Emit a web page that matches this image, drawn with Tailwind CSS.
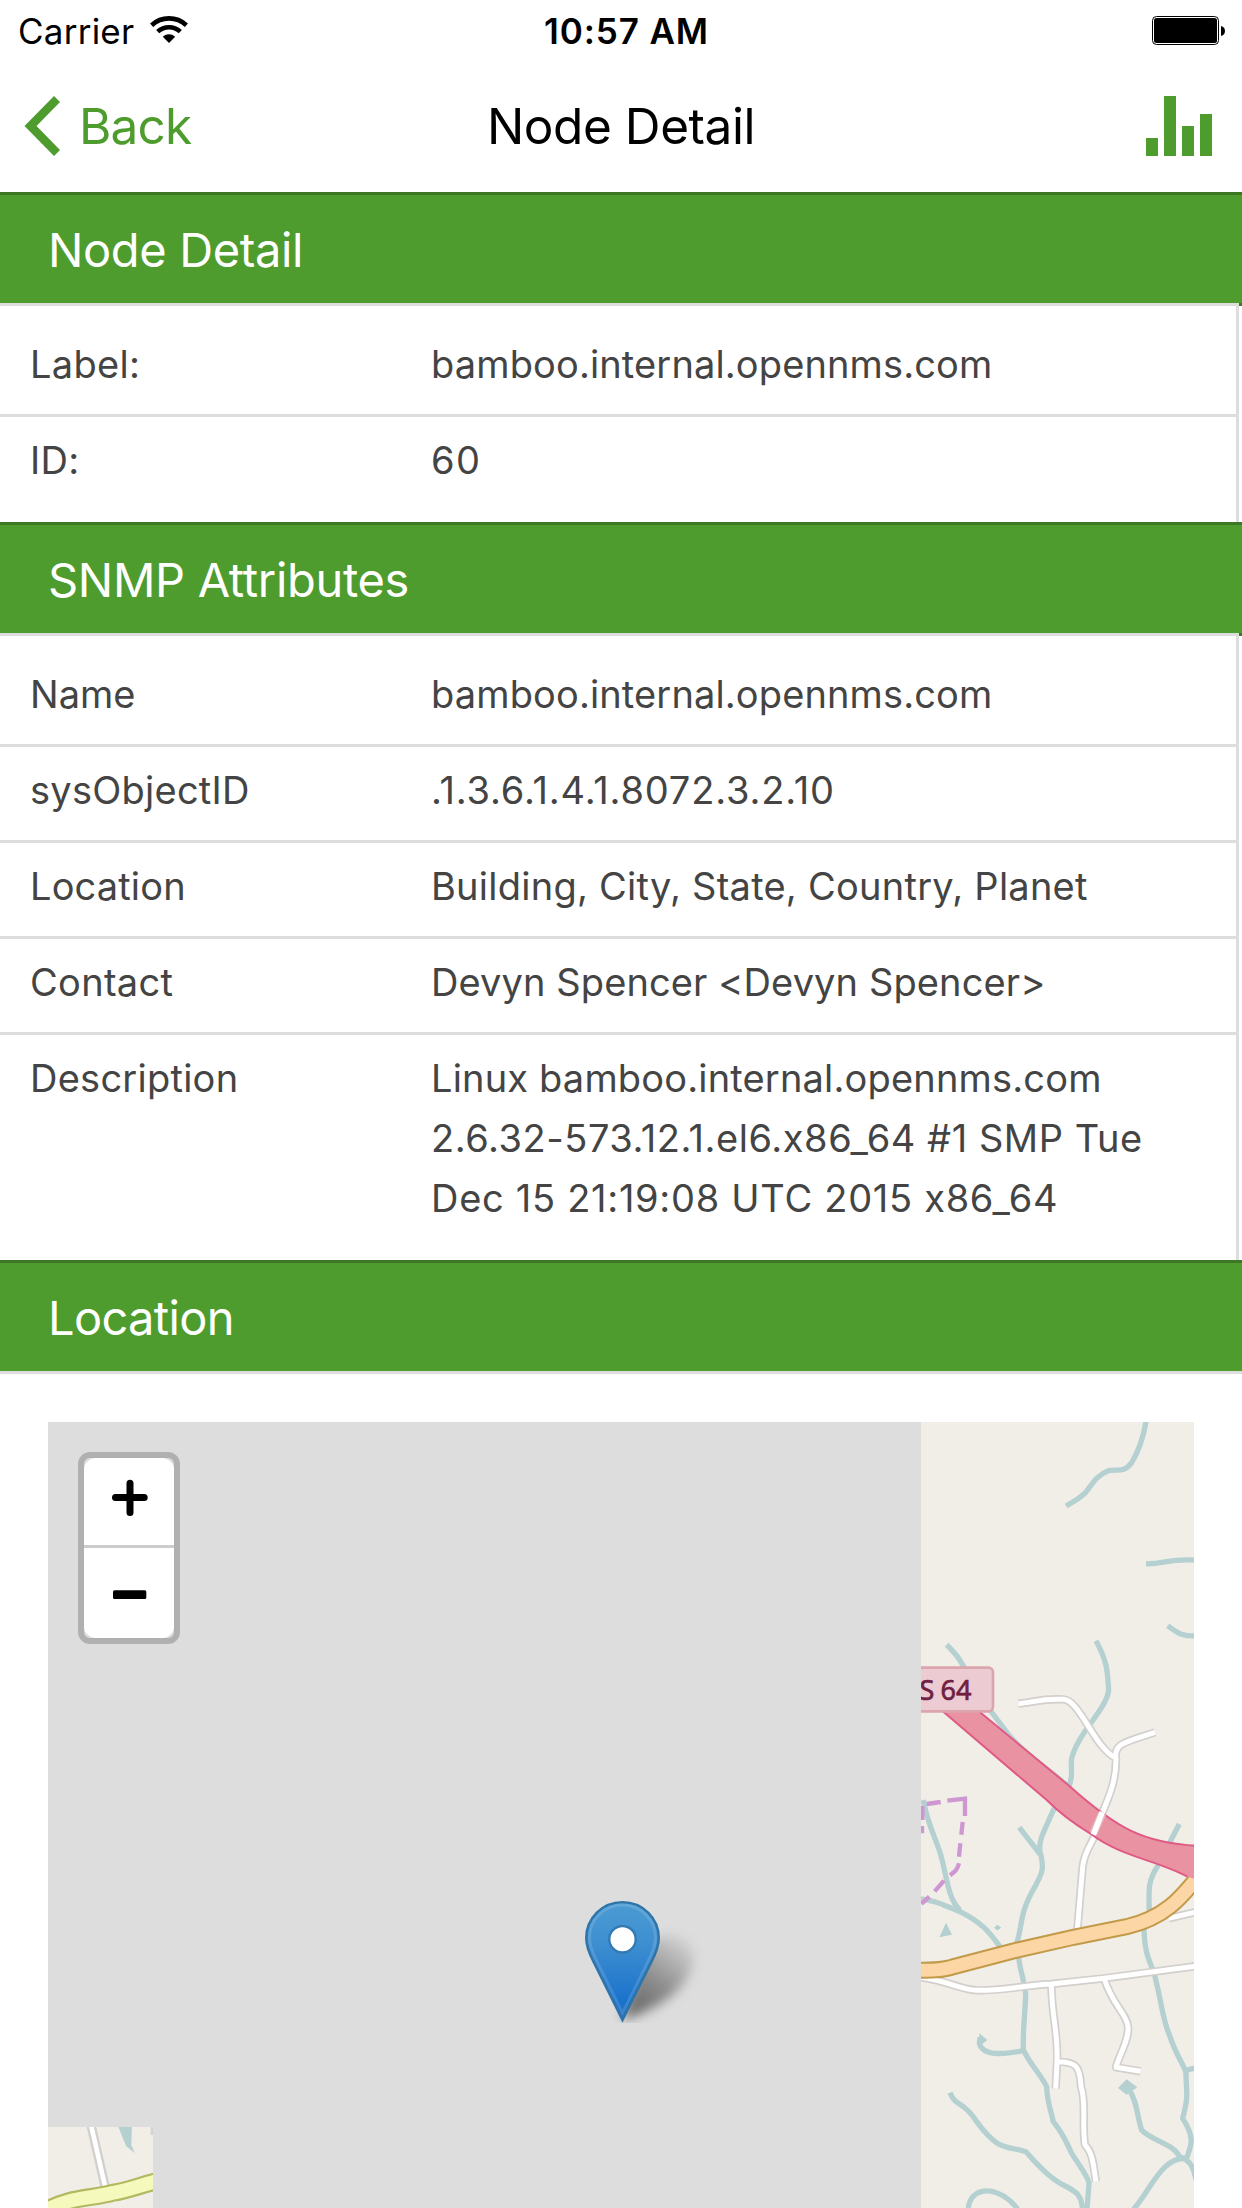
<!DOCTYPE html>
<html lang="en">
<head>
<meta charset="utf-8">
<title>Node Detail</title>
<script src="https://cdn.jsdelivr.net/npm/@tailwindcss/browser@4"></script>
</head>
<body class="bg-white">
<div class="flex h-[2208px] w-[1242px] flex-col overflow-hidden bg-white font-[Inter,sans-serif] text-black">

  <!-- Status bar -->
  <div class="grid h-[60px] shrink-0 grid-cols-3 items-center pr-[16px] pl-[18px] pt-[2px] text-[35px] leading-[58px]">
    <div class="flex items-center gap-4">
      <span class="tracking-[0.24px]">Carrier</span>
      <svg class="-mt-[2px] h-[28px] w-[38px]" viewBox="0 0 38 28">
        <g fill="none" stroke="#000" stroke-width="4.6">
          <path d="M1.6 9.2C11.5 0.1 26.500 0.100 36.400 9.200"/>
          <path d="M7.700 15.600C14.200 9.700 23.800 9.700 30.300 15.600"/>
        </g>
        <path d="M19 27l-6.200-6.300c3.500-3.300 8.900-3.300 12.400 0z"/>
      </svg>
    </div>
    <div class="pl-[9px] text-center font-semibold tracking-[0.88px]">10:57 AM</div>
    <svg class="-mt-[2px] h-[29px] w-[74px] justify-self-end" viewBox="0 0 74 29">
      <rect x="0.500" y="0.500" width="66" height="28" rx="4" fill="none" stroke="#000"/>
      <rect x="2" y="2" width="63" height="25" rx="2.500"/>
      <path d="M69 10c5.300 0.800 5.300 9.200 0 10z"/>
    </svg>
  </div>

  <!-- Navigation bar -->
  <div class="grid h-[132px] shrink-0 grid-cols-3 items-center text-[49.5px] leading-[90px]">
    <div class="flex items-center pl-[24px] text-[#4e9c2d]">
      <svg class="h-[60px] w-[36px]" viewBox="0 0 36 60" fill="currentColor"><path d="M30 0l6 6L12.500 30 36 54l-6 6L0.500 30z"/></svg>
      <span class="pl-[19px] tracking-[-0.82px]">Back</span>
    </div>
    <h1 class="text-center tracking-[-0.44px]">Node Detail</h1>
    <div class="flex h-[60px] items-end justify-end gap-[6px] pr-[30px]">
      <span class="h-[18px] w-[12px] bg-[#4e9c2d]"></span>
      <span class="h-[60px] w-[12px] bg-[#4e9c2d]"></span>
      <span class="h-[30px] w-[12px] bg-[#4e9c2d]"></span>
      <span class="h-[42px] w-[12px] bg-[#4e9c2d]"></span>
    </div>
  </div>

  <!-- Node detail -->
  <h2 class="flex h-[111px] shrink-0 border-t-[3px] border-[#3c7723] bg-[#4e9c2d] pt-[2px] pl-12 text-[47px] leading-[106px] tracking-[-0.37px] text-white">Node Detail</h2>
  <div class="flex h-[3px] shrink-0 bg-[#3c7723]"><div class="w-[1239px] bg-[#ddd]"></div></div>
  <dl class="mr-[3px] shrink-0 border-r-[3px] border-[#ddd] pt-[15px] pb-[12px] text-[38px] leading-[60px] text-[#444]">
    <div class="flex border-b-[3px] border-[#ddd] pt-[13px] pb-5"><dt class="w-[431px] shrink-0 pl-[30px] tracking-[0.3px]">Label:</dt><dd class="tracking-[0.13px]">bamboo.internal.opennms.com</dd></div>
    <div class="flex pt-[13px] pb-5"><dt class="w-[431px] shrink-0 pl-[30px] tracking-[0.3px]">ID:</dt><dd class="tracking-[1.44px]">60</dd></div>
  </dl>

  <!-- SNMP attributes -->
  <h2 class="flex h-[111px] shrink-0 border-t-[3px] border-[#3c7723] bg-[#4e9c2d] pt-[2px] pl-12 text-[47px] leading-[106px] tracking-[-0.32px] text-white">SNMP Attributes</h2>
  <div class="flex h-[3px] shrink-0 bg-[#3c7723]"><div class="w-[1239px] bg-[#ddd]"></div></div>
  <dl class="mr-[3px] shrink-0 border-r-[3px] border-[#ddd] pt-[15px] pb-[12px] text-[38px] leading-[60px] text-[#444]">
    <div class="flex border-b-[3px] border-[#ddd] pt-[13px] pb-5"><dt class="w-[431px] shrink-0 pl-[30px]">Name</dt><dd class="tracking-[0.13px]">bamboo.internal.opennms.com</dd></div>
    <div class="flex border-b-[3px] border-[#ddd] pt-[13px] pb-5"><dt class="w-[431px] shrink-0 pl-[30px] tracking-[0.25px]">sysObjectID</dt><dd class="tracking-[0.84px]">.1.3.6.1.4.1.8072.3.2.10</dd></div>
    <div class="flex border-b-[3px] border-[#ddd] pt-[13px] pb-5"><dt class="w-[431px] shrink-0 pl-[30px] tracking-[0.15px]">Location</dt><dd class="tracking-[0.25px]">Building, City, State, Country, Planet</dd></div>
    <div class="flex border-b-[3px] border-[#ddd] pt-[13px] pb-5"><dt class="w-[431px] shrink-0 pl-[30px] tracking-[0.3px]">Contact</dt><dd class="tracking-[0.11px]">Devyn Spencer &lt;Devyn Spencer&gt;</dd></div>
    <div class="flex pt-[13px] pb-5"><dt class="w-[431px] shrink-0 pl-[30px] tracking-[0.25px]">Description</dt>
      <dd class="whitespace-nowrap"><span class="tracking-[0.17px]">Linux bamboo.internal.opennms.com</span><br><span class="tracking-[0.54px]">2.6.32-573.12.1.el6.x86_64 #1 SMP Tue</span><br><span class="tracking-[0.71px]">Dec 15 21:19:08 UTC 2015 x86_64</span></dd></div>
  </dl>

  <!-- Location -->
  <h2 class="flex h-[114px] shrink-0 border-t-[3px] border-b-[3px] border-t-[#3c7723] border-b-[#ddd] bg-[#4e9c2d] pt-[2px] pl-12 text-[47px] leading-[106px] tracking-[-0.66px] text-white">Location</h2>
  <div class="relative mx-12 mt-12 h-[786px] shrink-0 overflow-hidden bg-[#ddd]">

    <!-- Map tile, east -->
    <svg class="absolute top-0 right-0 h-[786px] w-[273px]" viewBox="63 66 819 2358">
      <defs><filter id="smooth" x="-10%" y="-10%" width="120%" height="120%"><feGaussianBlur stdDeviation="2.2"/></filter></defs>
      <rect x="63" y="66" width="819" height="2358" fill="#f1eee8"/>
      <g filter="url(#smooth)">
      <g fill="none" stroke="#b5d0d0" stroke-width="16" stroke-linejoin="round">
        <path d="M742 40C733 110 712 160 695 188C670 222 650 205 625 212C590 225 575 255 557 277C540 295 520 305 498 318"/>
        <path d="M738 491C790 494 800 474 900 481"/>
        <path d="M803 677C830 695 845 714 900 706"/>
        <path d="M140 734C165 760 175 770 192 802L270 930L325 1003C380 1070 450 1110 505 1160"/>
        <path d="M588 722C625 790 622 820 626 870C620 930 530 1000 514 1080C514 1120 518 1130 505 1165L462 1226"/>
        <path d="M462 1226C430 1300 415 1320 420 1355C435 1410 425 1420 405 1460C355 1545 370 1570 350 1630L357 1680C362 1720 376 1750 377 1790C374 1850 368 1900 370 1950C395 2000 420 2020 440 2060C440 2100 455 2140 460 2165C490 2200 500 2230 515 2260C540 2300 565 2330 567 2350L560 2440"/>
        <path d="M358 1282L395 1330L420 1362"/>
        <path d="M70 1200C80 1270 115 1330 125 1375C140 1430 145 1500 180 1530"/>
        <path d="M50 1496C100 1498 130 1515 180 1535C250 1570 270 1600 300 1640"/>
        <path d="M370 1952C330 1960 250 1975 238 1930L240 1912"/>
        <path d="M150 2078C165 2120 190 2100 230 2165C300 2260 320 2235 378 2255C400 2280 440 2330 490 2355C530 2375 548 2385 548 2440"/>
        <path d="M205 2440C198 2355 300 2345 362 2440"/>
        <path d="M838 1272L808 1330M775 1395C745 1440 745 1460 748 1545L732 1590C735 1670 750 1680 765 1730C790 1830 785 1850 810 1910C830 1970 855 2000 858 2020C858 2080 868 2080 848 2155C890 2220 870 2240 860 2275"/>
        <path d="M855 2012L900 2000"/>
        <path d="M685 2065C715 2110 710 2150 725 2190C750 2220 820 2230 838 2270C870 2280 880 2300 888 2340"/>
        <path d="M690 2440C750 2380 780 2270 860 2275"/>
      </g>
      <g fill="#b5d0d0"><path d="M138 1568L156 1604L118 1612zM292 1574l12 9-12 8-10-8zM238 1900l24 20-26 22zM680 2038l32 24-32 22-26-20z"/></g>
      <g fill="none" stroke="#cf97d2" stroke-width="13">
        <path d="M80 1212L122 1206M142 1202L195 1196V1248M188 1266L184 1304M181 1330L177 1370M177 1390C172 1410 165 1415 150 1426M132 1442L104 1474M88 1490L64 1512M67 1218V1260M66 1278V1300"/>
      </g>
      <g fill="none" stroke="#d2cfcd" stroke-width="25" stroke-linejoin="round">
        <path id="lanes" d="M355 911C400 908 420 895 490 898C540 900 580 1040 648 1075C640 1030 680 1025 765 997M648 1075C650 1160 610 1220 600 1260C580 1340 555 1340 548 1400L532 1590M63 1732C150 1745 180 1768 230 1771C300 1773 380 1755 454 1752L612 1735L900 1697M806 1555L900 1533M454 1752C455 1850 475 1900 471 1985L467 2066M471 1985C530 1985 540 2000 543 2060C560 2110 545 2170 555 2235C580 2260 580 2300 588 2345M612 1735C640 1820 680 1840 684 1880C688 1920 655 1970 648 2002L722 2014"/>
        <use href="#lanes" stroke="#fff" stroke-width="15"/>
      </g>
      <path d="M40 1711C90 1711 130 1711 160 1700L340 1653L520 1612L680 1580C790 1555 840 1500 906 1415" fill="none" stroke="#c39a48" stroke-width="51"/>
      <path d="M40 1711C90 1711 130 1711 160 1700L340 1653L520 1612L680 1580C790 1555 840 1500 906 1415" fill="none" stroke="#fcd6a4" stroke-width="39"/>
      <path d="M124 930H232L508 1158C650 1285 730 1330 900 1338V1441L862 1430C770 1380 660 1370 570 1300C520 1270 480 1240 440 1200z" fill="#e892a2"/>
      <path d="M124 930L440 1200C480 1240 520 1270 570 1300C660 1370 770 1380 862 1430M232 930L508 1158C650 1285 730 1330 900 1338" fill="none" stroke="#e05a85" stroke-width="6"/>
      <path d="M607 1240L580 1300" stroke="#e5b4bd" stroke-width="25"/>
      <path d="M607 1236L580 1304" stroke="#fff" stroke-width="17"/>
      <rect x="20" y="803" width="259" height="131" rx="14" fill="#eccbd2" stroke="#dba5ae" stroke-width="8"/>
      </g>
      <text x="214" y="901" text-anchor="end" class="font-['Noto_Sans'] text-[81px] [word-spacing:-3px]" fill="#6f2042" stroke="#6f2042" stroke-width="2">S 64</text>
    </svg>

    <!-- Map tile, south-west -->
    <svg class="absolute bottom-0 left-0 h-[81px] w-[105px]" viewBox="54 81 315 243">
      <rect x="54" y="81" width="315" height="243" fill="#f1eee8"/>
      <g filter="url(#smooth)">
      <path d="M181 66L230 280" stroke="#d2cfcd" stroke-width="28"/>
      <path d="M181 66L230 280" stroke="#fff" stroke-width="14"/>
      <path d="M261 70H306L304 135L315 160L288 138z" fill="#b5d0d0"/>
      <path d="M362 70h20v35h-20z" fill="#d5d3d0"/>
      <path d="M30 339C130 285 180 298 250 278C300 270 330 255 395 240" fill="none" stroke="#b4b860" stroke-width="54"/>
      <path d="M30 339C130 285 180 298 250 278C300 270 330 255 395 240" fill="none" stroke="#f5f9bb" stroke-width="41"/>
      </g>
    </svg>

    <!-- Marker and its shadow -->
    <svg class="absolute top-[478px] left-[537px] h-[123px] w-[123px]" viewBox="0 0 41 41">
      <defs>
        <linearGradient id="pin" x1="0" y1="0" x2="0" y2="1"><stop offset="0" stop-color="#4b9bd3"/><stop offset=".35" stop-color="#3e8fd0"/><stop offset=".85" stop-color="#1a72cb"/><stop offset="1" stop-color="#2470b8"/></linearGradient>
        <linearGradient id="fade" x1="14" y1="38" x2="33" y2="12" gradientUnits="userSpaceOnUse"><stop offset="0" stop-color="#000" stop-opacity=".55"/><stop offset=".45" stop-color="#000" stop-opacity=".36"/><stop offset="1" stop-color="#000" stop-opacity=".03"/></linearGradient>
        <filter id="soft" x="-30%" y="-30%" width="160%" height="160%"><feGaussianBlur stdDeviation="1.900"/></filter>
      </defs>
      <path d="M12.500 40C16 30 17 13 27 12C37 11 38.500 20 33 27.500C29 33 22 37 12.500 40z" fill="url(#fade)" filter="url(#soft)"/>
      <path d="M12.500 .7C5.800 .7 .4 6 .4 12.700C.4 15.500 1.500 18 2.700 20.300L12.500 40L22.300 20.300C23.500 18 24.600 15.500 24.600 12.700C24.600 6 19.200 .7 12.500 .7z" fill="url(#pin)" stroke="#2e74a8" stroke-width=".8"/>
      <path d="M12.500 1.700C6.400 1.700 1.500 6.500 1.500 12.600C1.500 15.200 2.500 17.600 3.700 19.900L12.500 37.600L21.300 19.900C22.500 17.600 23.500 15.200 23.500 12.600C23.500 6.500 18.600 1.700 12.500 1.700z" fill="none" stroke="#fff" stroke-opacity=".13"/>
      <circle cx="12.500" cy="13.100" r="4.400" fill="#fff" stroke="#3379b2" stroke-width=".8"/>
    </svg>

    <!-- Zoom control -->
    <div class="absolute top-[30px] left-[30px] w-[102px] rounded-[12px] border-[6px] border-black/20 bg-clip-padding">
      <div class="flex h-[90px] justify-center rounded-t-[12px] border-b-[3px] border-[#ccc] bg-white">
        <svg class="h-[87px] w-[90px]" viewBox="0 0 90 87"><path d="M31.500 39.600H60.200M46 25.200V54.500" stroke="#000" stroke-width="7" stroke-linecap="round"/></svg>
      </div>
      <div class="flex h-[90px] justify-center rounded-b-[12px] bg-white">
        <svg class="h-[90px] w-[90px]" viewBox="0 0 90 90"><rect x="29" y="42.300" width="33.300" height="8.700" rx="1.500"/></svg>
      </div>
    </div>
  </div>
</div>
</body>
</html>
